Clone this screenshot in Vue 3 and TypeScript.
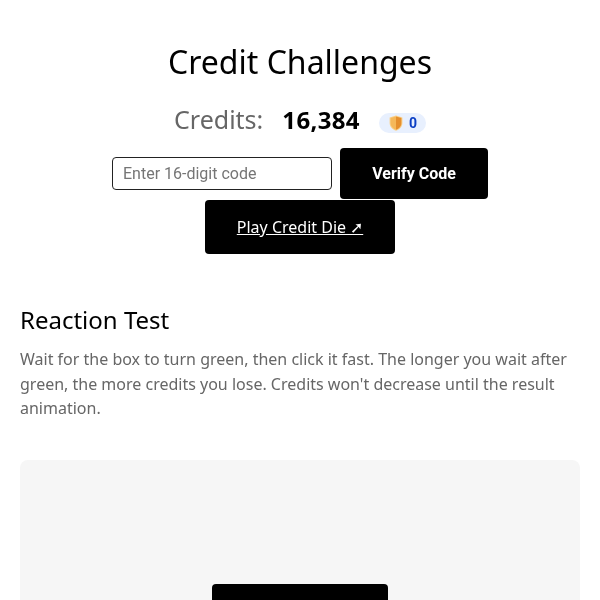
<script setup lang="ts">
const title: string = 'Credit Challenges'
const credits: string = '16,384'
</script>

<template>
  <div class="page">
    <header class="head">
      <h1 class="title">{{ title }}</h1>
      <div class="credits">
        <span class="label">Credits:</span>
        <span class="value">{{ credits }}</span>
        <span class="badge">
          <svg class="shield" viewBox="0 0 14 16" width="14" height="16" aria-hidden="true">
            <path d="M7 .4 .6 2.4V8C.6 11.8 3.4 14.4 7 15.8 10.6 14.4 13.4 11.8 13.4 8V2.4Z" fill="#f9d08a" />
            <path d="M7 1.4 1.6 3.1V8C1.6 11.2 4 13.6 7 14.7Z" fill="#f5b85a" />
            <path d="M7 1.4 12.4 3.1V8C12.4 11.2 10 13.6 7 14.7Z" fill="#e58f2e" />
          </svg>
          <span class="badge-num">0</span>
        </span>
      </div>
      <div class="verify">
        <input class="code" type="text" placeholder="Enter 16-digit code" />
        <button class="btn verify-btn" type="button">Verify Code</button>
      </div>
      <a class="btn play" href="#">Play Credit Die ➚</a>
    </header>

    <section class="test">
      <h2 class="subtitle">Reaction Test</h2>
      <p class="desc">Wait for the box to turn green, then click it fast. The longer you wait after green, the more credits you lose. Credits won't decrease until the result animation.</p>
      <div class="box">
        <button class="btn start" type="button" aria-label="Start"></button>
      </div>
    </section>
  </div>
</template>

<style>
html, body { margin: 0; padding: 0; background: #fff; overflow: hidden; }
</style>

<style scoped>
.page {
  box-sizing: border-box;
  width: 600px;
  height: 600px;
  overflow: hidden;
  padding: 40px 20px 0;
  font-family: "Noto Sans", sans-serif;
  color: #000;
  will-change: opacity;
}
.head { display: flex; flex-direction: column; align-items: center; }
.title { margin: 0; font-size: 32px; font-weight: 400; line-height: 44px; }
.credits {
  display: flex;
  align-items: center;
  margin-top: 17px;
  height: 36px;
}
.label { font-size: 25px; color: #666; }
.value { font-size: 24px; letter-spacing: 0.35px; font-weight: 700; margin-left: 19px; }
.badge {
  display: flex;
  align-items: center;
  gap: 6px;
  margin-left: 19px;
  margin-top: 7px;
  height: 20px;
  padding: 0 9px 0 10px;
  border-radius: 10px;
  background: #e8f0fe;
}
.badge-num { font-family: Roboto, sans-serif; font-size: 14px; font-weight: 700; color: #0b3fc4; }
.verify { display: flex; align-items: center; gap: 8px; margin-top: 11px; }
.code {
  box-sizing: border-box;
  width: 220px;
  height: 33px;
  padding: 0 10px;
  border: 1px solid #222;
  border-radius: 4px;
  font-family: Roboto, sans-serif;
  font-size: 16px;
  outline: none;
}
.code::placeholder { color: #757575; }
.btn {
  display: flex;
  align-items: center;
  justify-content: center;
  box-sizing: border-box;
  border: none;
  border-radius: 4px;
  background: #000;
  color: #fff;
}
.verify-btn {
  width: 148px;
  height: 51px;
  font-family: Roboto, sans-serif;
  font-size: 16px;
  font-weight: 700;
}
.play {
  width: 190px;
  height: 54px;
  margin-top: 1px;
  font-size: 16px;
  text-decoration: underline;
}
.test { margin-top: 48px; }
.subtitle { margin: 0; font-size: 24px; font-weight: 400; line-height: 36px; }
.desc { margin: 9px 0 0; font-size: 16px; line-height: 24.5px; color: #666; }
.box {
  display: flex;
  justify-content: center;
  height: 300px;
  margin-top: 39px;
  padding-top: 124px;
  box-sizing: border-box;
  background: #f6f6f6;
  border-radius: 8px;
}
.start { width: 176px; height: 52px; }
</style>
